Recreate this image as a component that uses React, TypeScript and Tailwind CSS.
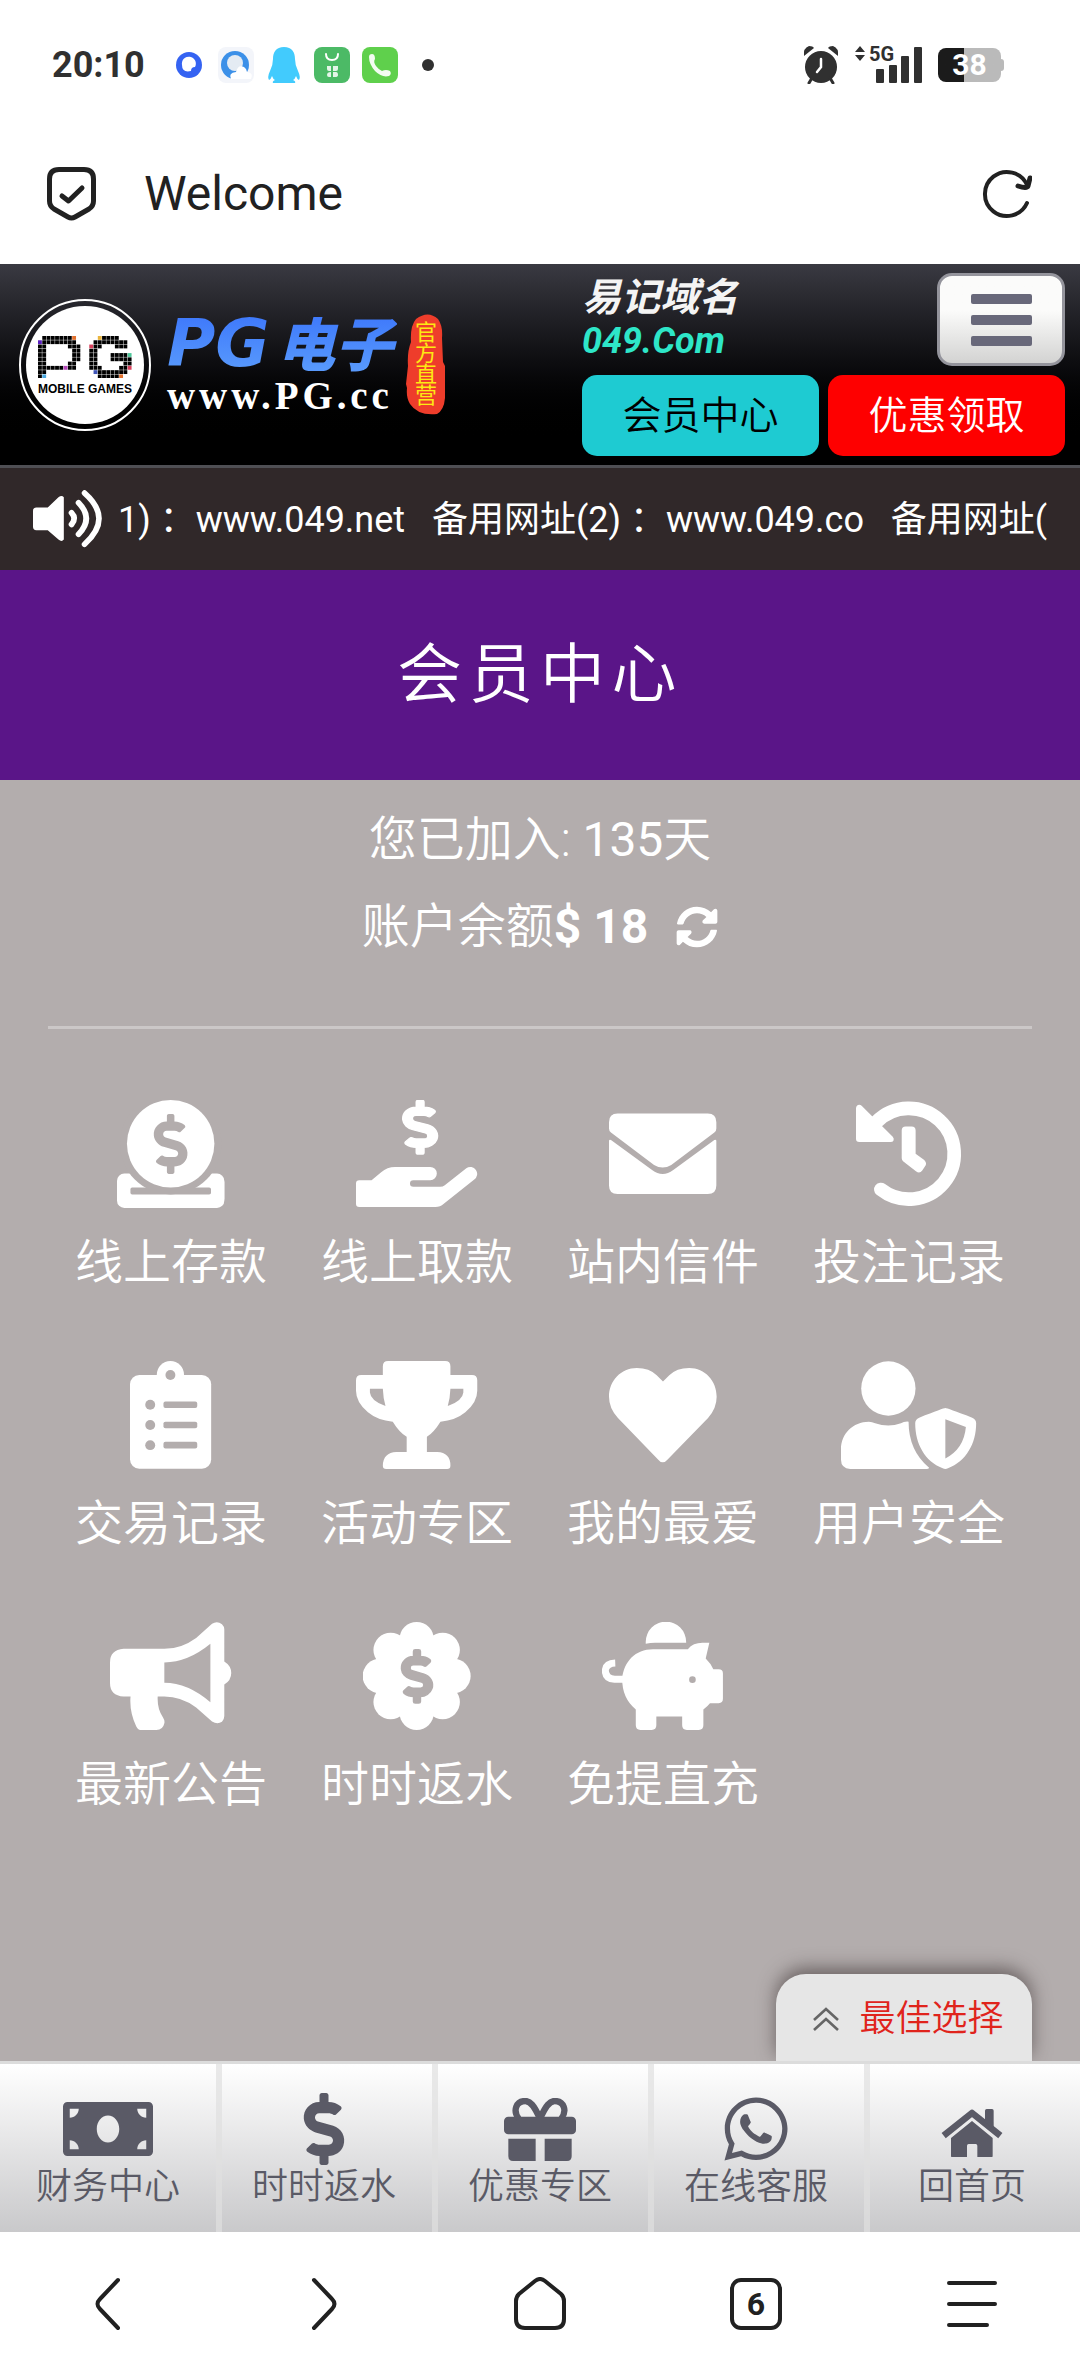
import React from 'react';
import { FaSyncAlt, FaMoneyBill, FaDollarSign, FaWhatsapp } from 'react-icons/fa';

const DOLLAR =
  'M209.2 233.4l-108-31.6C88.7 198.2 80 186.5 80 173.5c0-16.3 13.2-29.5 29.5-29.5h66.3c12.2 0 24.2 3.7 34.2 10.5 6.1 4.1 14.3 3.1 19.5-2l34.8-34c7.1-6.9 6.1-18.4-1.8-24.5C238 74.8 207.4 64.1 176 64V16c0-8.8-7.2-16-16-16h-32c-8.8 0-16 7.2-16 16v48h-2.5C45.8 64-5.4 118.7.5 183.6c4.2 46.1 39.4 83.6 83.8 96.6l102.5 30c12.5 3.7 21.2 15.3 21.2 28.3 0 16.3-13.2 29.5-29.5 29.5h-66.3C100 368 88 364.3 78 357.5c-6.1-4.1-14.3-3.1-19.5 2l-34.8 34c-7.1 6.9-6.1 18.4 1.8 24.5 24.5 19.2 55.1 29.9 86.5 30v48c0 8.8 7.2 16 16 16h32c8.8 0 16-7.2 16-16v-48.2c46.6-.9 90.3-28.6 105.7-72.7 21.5-61.6-14.6-124.8-72.5-141.7z';

const MenuIcon: React.FC<{ width: number; children: React.ReactNode }> = ({ width, children }) => (
  <svg viewBox={`0 0 ${width} 326`} className="h-[108px] w-auto" fill="white" fillRule="evenodd" aria-hidden="true">
    {children}
  </svg>
);

const DepositIcon = () => (
  <MenuIcon width={324}>
    <rect x="0" y="222" width="324" height="104" rx="22" />
    <circle cx="162" cy="132" r="153" fill="#b3adad" />
    <rect x="40" y="264" width="244" height="21" rx="6" fill="#b3adad" />
    <path d="M0 246H40V300H0zM284 246H324V300H284z" />
    <circle cx="162" cy="132" r="132" />
    <path d={DOLLAR} fill="#b3adad" transform="translate(111 42) scale(.354)" />
  </MenuIcon>
);

const WithdrawIcon = () => (
  <MenuIcon width={366}>
    <path d={DOLLAR} transform="translate(141 1) scale(.365 .317)" stroke="white" strokeWidth="12" />
    <path d="M10 242H47L76 218Q94 202 118 202H224A20 20 0 0 1 224 242H173A10 10 0 0 0 173 262H254Q262 262 268 257L333 206A20 20 0 0 1 357 240L265 313Q254 323 240 323H10Q0 323 0 313V252Q0 242 10 242Z" />
  </MenuIcon>
);

const MailIcon = () => (
  <MenuIcon width={324}>
    <path d="M26 41H298Q324 41 324 67V86Q324 94 318 98L188 196Q162 212 136 196L6 98Q0 94 0 86V67Q0 41 26 41Z" />
    <path d="M0 122Q2 118 6 121L130 211Q162 235 194 211L318 121Q322 118 324 122V258Q324 284 298 284H26Q0 284 0 258Z" />
  </MenuIcon>
);

const HistoryIcon = () => (
  <MenuIcon width={324}>
    <path d="M65 66A137 137 0 1 1 78 270" fill="none" stroke="white" strokeWidth="41" strokeLinecap="round" />
    <path d="M3 25Q4 14 13 14Q17 14 20 17L114 111Q119 117 116 123Q114 127 107 127H13Q3 127 3 117Z" />
    <path d="M141 92Q141 80 153 80H171Q183 80 183 92V162L209 181Q219 191 211 201L203 213Q195 223 184 215L146 186Q141 182 141 176Z" />
  </MenuIcon>
);

const ClipboardIcon = () => (
  <MenuIcon width={245}>
    <rect x="0" y="42" width="245" height="283" rx="28" />
    <circle cx="122" cy="41" r="41" />
    <g fill="#b3adad">
      <circle cx="122" cy="42" r="15" />
      {[132, 193, 254].map((y) => (
        <React.Fragment key={y}>
          <circle cx="61" cy={y} r="15" />
          <rect x="101" y={y - 10} width="102" height="20" rx="6" />
        </React.Fragment>
      ))}
    </g>
  </MenuIcon>
);

const TrophyIcon = () => (
  <MenuIcon width={366}>
    <path d="M97 0H269Q285 0 285 16V42H350Q366 42 366 58V90Q366 125 330 155Q300 180 255 183Q236 214 214 229V275H245Q285 277 285 316Q285 326 275 326H91Q81 326 81 316Q82 277 122 275H153V229Q130 214 111 183Q66 180 36 155Q0 125 0 90V58Q0 42 16 42H81V16Q81 0 97 0ZM42 84V95Q44 120 89 136Q82 112 81 84ZM324 84H285Q284 112 277 136Q322 120 324 95Z" />
  </MenuIcon>
);

const HeartIcon = () => (
  <MenuIcon width={325}>
    <path d="M163 62L144 43Q122 21 84 21C36 21 0 60 0 108Q0 143 27 172L148 297Q162 315 177 297L299 172Q325 143 325 108C325 60 290 21 242 21Q204 21 182 43Z" />
  </MenuIcon>
);

const SafetyIcon = () => (
  <MenuIcon width={408}>
    <circle cx="143" cy="83" r="82" />
    <path d="M28 326Q0 324 0 298V266C0 220 36 183 84 183Q94 183 103 188Q143 202 181 188Q190 182 204 183Q204 270 266 322Q265 326 258 326Z" />
    <path d="M315 142Q320 142 396 171Q408 176 408 188C408 250 377 303 323 324Q315 328 307 324C253 303 224 250 224 188Q224 176 236 171Q310 142 315 142ZM315 176V294Q371 265 377 199Z" />
  </MenuIcon>
);

const MegaphoneIcon = () => (
  <MenuIcon width={366}>
    <path d="M41 81H164Q215 81 260 48L308 5Q324 -5 338 7Q345 14 345 22V119Q366 132 366 154Q366 176 345 189V284Q345 294 338 301Q324 310 308 300L260 258Q215 225 164 225H144Q142 262 160 288Q166 297 164 306Q160 326 140 326H92Q84 326 79 315Q58 270 62 225H41Q0 222 0 184V122Q0 84 41 81ZM164 122V183Q235 183 303 242V66Q235 122 164 122Z" />
  </MenuIcon>
);

const RebateIcon = () => (
  <MenuIcon width={324}>
    <circle cx="162" cy="163" r="115" />
    {[0, 45, 90, 135, 180, 225, 270, 315].map((a) => (
      <circle key={a} cx="162" cy="52" r="52" transform={`rotate(${a} 162 163)`} />
    ))}
    <path d={DOLLAR} fill="#b3adad" stroke="#b3adad" strokeWidth="14" transform="translate(116 84) scale(.326 .314)" />
  </MenuIcon>
);

const PiggyIcon = () => (
  <MenuIcon width={366}>
    <path d="M132 66V60A61 61 0 0 1 254 60V63H160Q146 63 132 66Z" />
    <path d="M154 82H259Q275 63 303 63H324L313 110Q328 124 336 143H352Q365 143 365 155V232Q365 245 352 245H326Q318 255 306 264V312Q306 326 292 326H256Q242 326 242 312V285H164V312Q164 326 150 326H116Q102 326 102 312V264Q60 230 61 170C66 120 100 82 154 82ZM273 164A10 10 0 1 0 273 184A10 10 0 1 0 273 164Z" />
    <path d="M64 173H38Q10 171 10 146Q12 125 40 124" fill="none" stroke="white" strokeWidth="21" />
  </MenuIcon>
);

const GiftIcon = () => (
  <svg viewBox="0 0 216 189" className="w-[72px]" fill="currentColor" aria-hidden="true">
    <rect x="0" y="56" width="216" height="53" rx="13" />
    <path d="M13 122H95V189H27Q13 189 13 175ZM122 122H203V175Q203 189 189 189H122Z" />
    <g fill="none" stroke="currentColor" strokeWidth="19" strokeLinejoin="round">
      <path d="M106 58C90 22 78 9 64 9C36 9 26 38 44 62" />
      <path d="M110 58C126 22 138 9 152 9C180 9 190 38 172 62" />
    </g>
  </svg>
);

const HouseIcon = () => (
  <svg viewBox="0 0 186 146" className="mt-[8px] w-[62px]" fill="currentColor" aria-hidden="true">
    <path d="M8 80L93 12L178 80" fill="none" stroke="currentColor" strokeWidth="20" strokeLinejoin="round" />
    <path d="M132 5Q132 0 137 0H153Q158 0 158 5V60L132 40Z" />
    <path d="M93 36L155 87V140Q155 146 149 146H109V110Q109 105 104 105H83Q78 105 78 110V146H36Q30 146 30 140V87Z" />
  </svg>
);

const SpeakerIcon = () => (
  <svg viewBox="0 0 206 171" className="w-[69px] shrink-0" fill="white" aria-hidden="true">
    <path d="M10 52H44L76 22Q86 14 92 22V148Q86 156 76 148L44 120H10Q0 120 0 110V62Q0 52 10 52Z" />
    <g fill="none" stroke="white" strokeWidth="17" strokeLinecap="round">
      <path d="M115 68Q131 85 115 103" />
      <path d="M136 38Q182 85 136 132" />
      <path d="M154 9Q240 85 154 162" />
    </g>
  </svg>
);

const menu = [
  { label: '线上存款', icon: <DepositIcon /> },
  { label: '线上取款', icon: <WithdrawIcon /> },
  { label: '站内信件', icon: <MailIcon /> },
  { label: '投注记录', icon: <HistoryIcon /> },
  { label: '交易记录', icon: <ClipboardIcon /> },
  { label: '活动专区', icon: <TrophyIcon /> },
  { label: '我的最爱', icon: <HeartIcon /> },
  { label: '用户安全', icon: <SafetyIcon /> },
  { label: '最新公告', icon: <MegaphoneIcon /> },
  { label: '时时返水', icon: <RebateIcon /> },
  { label: '免提直充', icon: <PiggyIcon /> },
];

const tabs = [
  { label: '财务中心', icon: <FaMoneyBill className="h-[72px] w-[90px]" /> },
  { label: '时时返水', icon: <FaDollarSign className="size-[72px]" /> },
  { label: '优惠专区', icon: <GiftIcon /> },
  { label: '在线客服', icon: <FaWhatsapp className="size-[72px]" /> },
  { label: '回首页', icon: <HouseIcon /> },
];

// x = black block, other letters pick a colour from `tint`
const mosaic = [
  '.xxxxxxxo.....yxxxx...',
  'vxxxxxxxx....xxxxxxxx.',
  'xx.....xxx..rxx...xxx.',
  'xx......xx..xx........',
  'xx......xx..xx...xxxxg',
  'xx......xx..xx...xxxxx',
  'xx.....xx...xx......xx',
  'xxxxxxmxx...xxx....xxr',
  'xx...........bxxxxxxx.',
  'xc............xxxxxo..',
];

const tint: Record<string, string> = {
  x: '#000000',
  o: '#e2702c',
  y: '#e9b43c',
  v: '#5a1fc0',
  r: '#d8405c',
  g: '#4fc79a',
  m: '#b245b8',
  b: '#3f55b8',
  c: '#4aa8e0',
};

const StatusBar = () => (
  <div className="flex h-[130px] items-center justify-between pl-[52px] pr-[76px] text-[#303030]">
    <div className="flex items-center">
      <span className="w-[124px] text-[36px] leading-[40px] font-bold">20:10</span>
      <svg viewBox="0 0 26 26" className="w-[26px]" aria-hidden="true">
        <circle cx="13" cy="13" r="13" fill="#3563f2" />
        <path d="M6 13A7 7 0 1 1 19 15Q15 15 15 19Q6 21 6 13Z" fill="white" />
      </svg>
      <svg viewBox="0 0 36 36" className="ml-[16px] w-[36px]" aria-hidden="true">
        <rect width="36" height="36" rx="8" fill="#f3f5fa" />
        <circle cx="17" cy="18" r="14" fill="#3c90e8" />
        <circle cx="17" cy="16" r="8" fill="#e4ebf3" />
        <path d="M13 32Q10 26 18 25Q20 17 26 20Q29 22 29 25Q36 26 33 32Z" fill="white" />
      </svg>
      <svg viewBox="0 0 32 36" className="ml-[14px] w-[32px]" fill="#42cbfd" aria-hidden="true">
        <path d="M16 0C8 0 5 5 5 12Q5 18 2 24Q-1 30 1 33Q3 32 4 29Q5 32 7 33Q4 34 5 36H27Q28 34 25 33Q27 32 28 29Q29 32 31 33Q33 30 30 24Q27 18 27 12C27 5 24 0 16 0Z" />
      </svg>
      <svg viewBox="0 0 36 36" className="ml-[14px] w-[36px]" aria-hidden="true">
        <rect width="36" height="36" rx="8" fill="#4cba66" />
        <path d="M12 7Q12 13 18 13Q24 13 24 7" fill="none" stroke="white" strokeWidth="2" strokeLinecap="round" />
        <path d="M13 19H17V24H15Q13 24 13 22ZM19 19H24V22Q24 24 22 24H19ZM13 28Q13 25 17 25V30H15Q13 30 13 28ZM19 25H22Q24 25 24 28Q24 30 21 30H19Z" fill="white" opacity=".85" />
      </svg>
      <svg viewBox="0 0 36 36" className="ml-[12px] w-[36px]" aria-hidden="true">
        <rect width="36" height="36" rx="8" fill="#5fd04c" />
        <path d="M7 10Q7 7 10 7Q13 7 13 12Q11 15 14 19Q17 23 20 24Q24 22 28 24Q30 27 27 29Q20 31 13 24Q7 17 7 10Z" fill="white" opacity=".92" />
      </svg>
      <span className="ml-[24px] size-[12px] rounded-full bg-[#303030]" />
    </div>
    <div className="flex items-center">
      <svg viewBox="0 0 36 38" className="w-[36px]" fill="#303030" aria-hidden="true">
        <circle cx="18" cy="21" r="16" />
        <path d="M1 10Q0 2 6 0Q10 0 11 2ZM35 10Q36 2 30 0Q26 0 25 2Z" />
        <path d="M9 32L6 37M27 32L30 37" stroke="#303030" strokeWidth="3" strokeLinecap="round" />
        <path d="M18 13V21L14 26" fill="none" stroke="white" strokeWidth="2.5" strokeLinecap="round" />
      </svg>
      <div className="relative ml-[16px]">
        <svg viewBox="0 0 67 38" className="w-[67px]" fill="#303030" aria-hidden="true">
          <path d="M0 6L5 0L10 6ZM0 9L5 15L10 9Z" />
          <rect x="21" y="23" width="8" height="14" rx="1" />
          <rect x="34" y="19" width="8" height="18" rx="1" />
          <rect x="46" y="10" width="8" height="27" rx="1" />
          <rect x="59" y="1" width="8" height="36" rx="1" />
        </svg>
        <span className="absolute -top-[4px] left-[14px] text-[20px] leading-[24px] font-bold">5G</span>
      </div>
      <div className="ml-[16px] flex items-center">
        <span className="flex h-[34px] w-[63px] items-center justify-center rounded-[8px] bg-linear-to-r from-[#1b1b1b] from-41% to-[#bababa] to-41% text-[30px] leading-[34px] font-bold text-white">
          38
        </span>
        <span className="h-[12px] w-[3px] rounded-r-full bg-[#bababa]" />
      </div>
    </div>
  </div>
);

const AddressBar = () => (
  <div className="flex h-[134px] items-center pb-[6px] pl-[47px] pr-[48px] text-[#212121]">
    <svg viewBox="0 0 49 54" className="w-[49px]" fill="none" stroke="currentColor" strokeWidth="5" strokeLinecap="round" strokeLinejoin="round" aria-hidden="true">
      <path d="M12 2.5H37Q46.5 2.5 46.5 12V34Q46.5 39 42 42L28 50Q24.5 52 21 50L7 42Q2.5 39 2.5 34V12Q2.5 2.5 12 2.5Z" />
      <path d="M15 29L21.5 34L35 21" />
    </svg>
    <span className="ml-[48px] flex-1 text-[48px] leading-[56px]">Welcome</span>
    <button type="button" aria-label="Reload">
      <svg viewBox="0 0 50 50" className="w-[50px]" fill="none" stroke="currentColor" strokeWidth="4" strokeLinecap="round" strokeLinejoin="round" aria-hidden="true">
        <path d="M45 34A22 22 0 1 1 45 16" />
        <path d="M36 17Q45 20 46 17L48 9" strokeWidth="5" />
      </svg>
    </button>
  </div>
);

const Logo = () => (
  <a href="#home" className="flex items-center">
    <div className="flex size-[132px] items-center justify-center rounded-full border-2 border-white">
      <div className="flex size-[118px] flex-col items-center rounded-full bg-white pt-[30px]">
        <svg viewBox="0 0 220 100" className="w-[94px]" aria-hidden="true">
          {mosaic.map((row, y) =>
            row.split('').map((c, x) =>
              c === '.' ? null : <rect key={`${x}-${y}`} x={x * 10} y={y * 10} width="9" height="9" fill={tint[c]} />
            )
          )}
        </svg>
        <span className="mt-[4px] font-['Liberation_Sans'] text-[12px] leading-[14px] font-bold whitespace-nowrap text-black">MOBILE GAMES</span>
      </div>
    </div>
    <div className="ml-[16px] flex w-[230px] flex-col">
      <div className="flex items-baseline justify-between bg-linear-to-b from-[#3d76fb] to-[#5a9bfc] bg-clip-text pr-[4px] leading-[60px] font-bold whitespace-nowrap text-transparent italic">
        <span className="font-['DejaVu_Sans'] text-[66px]">PG</span>
        <span className="font-['Noto_Sans_CJK_SC'] text-[58px] font-black">电子</span>
      </div>
      <span className="font-['Liberation_Serif'] text-[39px] leading-[44px] font-bold tracking-widest whitespace-nowrap text-white">www.PG.cc</span>
    </div>
    <div className="relative ml-[9px] h-[101px] w-[40px]">
      <svg viewBox="0 0 40 101" className="absolute inset-0" fill="#ee3d2b" aria-hidden="true">
        <path d="M10 5Q22 -4 32 5Q37 12 36 24L37 48L39 52V84Q38 96 31 100Q12 102 4 90Q0 84 1 74L0 70L2 52Q1 38 5 28Q4 12 10 5Z" />
      </svg>
      <span className="absolute inset-x-0 top-[8px] mx-auto block w-[22px] text-[22px] leading-[21px] text-[#fdea13]">官方直营</span>
    </div>
  </a>
);

const Header = () => (
  <header className="flex h-[204px] justify-between border-b-3 border-[#4f4f54] bg-linear-to-b from-[#3a3a42] to-black to-90% pl-[19px] pr-[15px]">
    <Logo />
    <div className="flex w-[483px] flex-col gap-[9px] pt-[9px]">
      <div className="flex h-[93px] items-stretch justify-between">
        <a href="#domain" className="pt-[2px] font-bold whitespace-nowrap italic">
          <span className="block text-[39px] leading-[46px] text-[#f4f4f4]">易记域名</span>
          <span className="block text-[36px] leading-[40px] text-[#2ee6c8]">049.Com</span>
        </a>
        <button type="button" aria-label="菜单" className="flex w-[128px] flex-col items-center justify-center gap-[11px] rounded-[15px] border-3 border-[#94949c] bg-linear-to-b from-[#fbfbfa] from-40% to-[#d3d3d2]">
          <span className="h-[10px] w-[61px] rounded-[2px] bg-[#68687a]" />
          <span className="h-[10px] w-[61px] rounded-[2px] bg-[#68687a]" />
          <span className="h-[10px] w-[61px] rounded-[2px] bg-[#68687a]" />
        </button>
      </div>
      <div className="grid h-[81px] grid-cols-2 gap-[9px] text-[39px] leading-[48px] font-[350]">
        <button type="button" className="rounded-[15px] bg-[#1ecbd2] text-black">会员中心</button>
        <button type="button" className="rounded-[15px] bg-[#fe0000] text-white">优惠领取</button>
      </div>
    </div>
  </header>
);

const Notice = () => (
  <div className="flex h-[102px] items-center gap-[16px] bg-[#302829] pl-[33px] pr-[28px] text-white">
    <SpeakerIcon />
    <p className="min-w-0 flex-1 overflow-hidden pt-[2px] text-[36px] leading-[48px] whitespace-pre">
      {'1) ：www.049.net   备用网址(2) ：www.049.co   备用网址('}
    </p>
  </div>
);

const Member = () => (
  <main className="relative flex-1 bg-[#b3adad] px-[48px] pb-[200px] font-[350] text-white">
    <div className="flex flex-col items-center gap-[16px] pt-[24px] text-[48px] leading-[71px]">
      <p>
        您已加入: <span className="font-normal">135</span>天
      </p>
      <p className="flex items-center">
        账户余额<b className="font-bold">$ 18</b>
        <button type="button" aria-label="刷新" className="ml-[28px]">
          <FaSyncAlt className="size-[42px]" />
        </button>
      </p>
    </div>
    <hr className="mt-[64px] border-t-3 border-[#cbc7c7]" />
    <nav className="mt-[71px] grid grid-cols-4 gap-y-[62px]">
      {menu.map((item) => (
        <a key={item.label} href="#menu" className="flex flex-col items-center gap-[19px]">
          {item.icon}
          <span className="text-[48px] leading-[72px] whitespace-nowrap">{item.label}</span>
        </a>
      ))}
    </nav>
    <button type="button" className="absolute right-[48px] bottom-0 flex h-[87px] w-[256px] items-center justify-center gap-[20px] rounded-t-[30px] bg-[#e6e6e6] pt-[2px] pl-[9px] text-[36px] text-[#e0241c] shadow-[0_-6px_18px_rgba(60,50,50,0.6)]">
      <svg viewBox="0 0 26 24" className="w-[26px]" fill="none" stroke="#666" strokeWidth="2.6" aria-hidden="true">
        <path d="M1 13L13 2L25 13M1 23L13 12L25 23" />
      </svg>
      最佳选择
    </button>
  </main>
);

const TabBar = () => (
  <nav className="relative grid h-[171px] grid-cols-5 border-t-3 border-[#dcdcdc] bg-linear-to-b from-white to-[#c9c9cb] text-[#5a5a66]">
    {tabs.map((tab) => (
      <a key={tab.label} href="#tab" className="flex flex-col items-center pt-[29px] not-first:shadow-[inset_6px_0_0_rgba(224,224,224,0.7)]">
        <span className="flex h-[72px] items-center">{tab.icon}</span>
        <span className="text-[36px] leading-[44px] font-[350] whitespace-nowrap">{tab.label}</span>
      </a>
    ))}
  </nav>
);

const BrowserBar = () => (
  <footer className="grid h-[144px] grid-cols-5 place-items-center bg-white text-[#212121]">
    <button type="button" aria-label="后退">
      <svg viewBox="0 0 26 54" className="w-[26px]" fill="none" stroke="currentColor" strokeWidth="4" strokeLinecap="round" aria-hidden="true">
        <path d="M23 3L5 22Q0 27 5 32L23 51" />
      </svg>
    </button>
    <button type="button" aria-label="前进">
      <svg viewBox="0 0 26 54" className="w-[26px]" fill="none" stroke="currentColor" strokeWidth="4" strokeLinecap="round" aria-hidden="true">
        <path d="M3 3L21 22Q26 27 21 32L3 51" />
      </svg>
    </button>
    <button type="button" aria-label="主页">
      <svg viewBox="0 0 54 54" className="w-[54px]" fill="none" stroke="currentColor" strokeWidth="4" aria-hidden="true">
        <path d="M22 4Q27 0 32 4L48 17Q51 20 51 24V42Q51 51 42 51H12Q3 51 3 42V24Q3 20 6 17Z" />
      </svg>
    </button>
    <button type="button" className="flex size-[52px] items-center justify-center rounded-[11px] border-4 border-[#212121] text-[32px] leading-[40px] font-bold">
      6
    </button>
    <button type="button" aria-label="更多">
      <svg viewBox="0 0 50 48" className="w-[50px]" stroke="currentColor" strokeWidth="4" strokeLinecap="round" aria-hidden="true">
        <path d="M2 3H48M2 24H48M2 45H40" />
      </svg>
    </button>
  </footer>
);

export default function App() {
  return (
    <div className="flex min-h-screen flex-col bg-white font-[Roboto,'Noto_Sans_CJK_SC',sans-serif]">
      <StatusBar />
      <AddressBar />
      <Header />
      <Notice />
      <h1 className="bg-[#5a1588] py-[57px] text-center text-[65px] leading-[96px] font-[350] tracking-widest text-white">会员中心</h1>
      <Member />
      <TabBar />
      <BrowserBar />
    </div>
  );
}
